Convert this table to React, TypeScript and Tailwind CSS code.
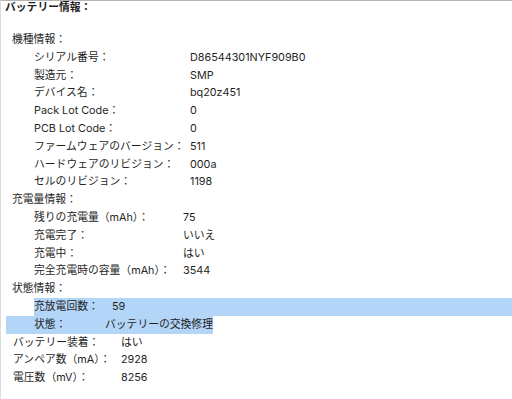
import React from "react";

type Item = { label: string; value: string; w: number };

const hardware: Item[] = [
  { label: "シリアル番号：", value: "D86544301NYF909B0", w: 156 },
  { label: "製造元：", value: "SMP", w: 156 },
  { label: "デバイス名：", value: "bq20z451", w: 156 },
  { label: "Pack Lot Code：", value: "0", w: 156 },
  { label: "PCB Lot Code：", value: "0", w: 156 },
  { label: "ファームウェアのバージョン：", value: "511", w: 156 },
  { label: "ハードウェアのリビジョン：", value: "000a", w: 156 },
  { label: "セルのリビジョン：", value: "1198", w: 156 },
];

const charge: Item[] = [
  { label: "残りの充電量（mAh）：", value: "75", w: 149 },
  { label: "充電完了：", value: "いいえ", w: 149 },
  { label: "充電中：", value: "はい", w: 149 },
  { label: "完全充電時の容量（mAh）：", value: "3544", w: 149 },
];

const power: Item[] = [
  { label: "バッテリー装着：", value: "はい", w: 108 },
  { label: "アンペア数（mA）：", value: "2928", w: 108 },
  { label: "電圧数（mV）：", value: "8256", w: 108 },
];

function Row({ item }: { item: Item }) {
  return (
    <div className="flex whitespace-nowrap">
      <span className="shrink-0" style={{ width: item.w }}>
        {item.label}
      </span>
      <span>{item.value}</span>
    </div>
  );
}

function Group({ title, items }: { title: string; items: Item[] }) {
  return (
    <div>
      <div className="pl-[11px]">{title}</div>
      <div className="pl-[33px]">
        {items.map((it) => (
          <Row key={it.label} item={it} />
        ))}
      </div>
    </div>
  );
}

export default function App() {
  return (
    <div className="w-[512px] h-[399px] overflow-hidden bg-white border-t border-t-[#b4b4b4] border-l border-l-[#dddddd] text-[#1f1f1f] text-[10.8px] font-['Inter','Noto_Sans_CJK_JP',sans-serif]">
      <div className="pl-[4px] pt-[1px] font-bold leading-[12px]">バッテリー情報：</div>
      <div className="mt-[17px] leading-[17.8px]">
        <Group title="機種情報：" items={hardware} />
        <Group title="充電量情報：" items={charge} />
        <div>
          <div className="pl-[11px]">状態情報：</div>
          {/* selected text: first line runs to the edge, second ends after the value */}
          <div className="ml-[33px] flex whitespace-nowrap bg-[#b3d5f8]">
            <span className="w-[78px] shrink-0">充放電回数：</span>
            <span>59</span>
          </div>
          <div className="ml-[5px] pl-[28px] flex w-fit whitespace-nowrap bg-[#b3d5f8]">
            <span className="w-[71px] shrink-0">状態：</span>
            <span>バッテリーの交換修理</span>
          </div>
        </div>
        <div className="pl-[12px]">
          {power.map((it) => (
            <Row key={it.label} item={it} />
          ))}
        </div>
      </div>
    </div>
  );
}
